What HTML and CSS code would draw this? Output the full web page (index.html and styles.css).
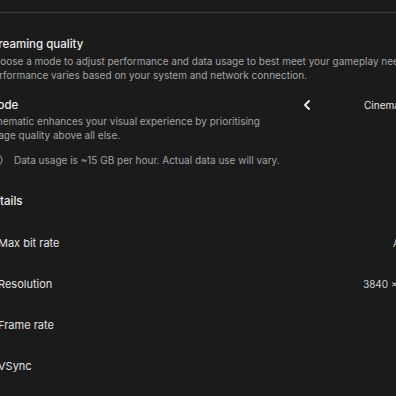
FILE: index.html
```html
<!DOCTYPE html>
<html>
<head>
<meta charset="utf-8">
<link rel="stylesheet" href="styles.css">
</head>
<body>
<div class="page">
  <div class="topbar"></div>
  <section class="quality">
    <h2 class="title">Streaming quality</h2>
    <p class="desc">Choose a mode to adjust performance and data usage to best meet your gameplay needs.<br>Performance varies based on your system and network connection.</p>

    <div class="mode-row">
      <div class="mode-text">
        <div class="label">Mode</div>
        <p class="desc mode-desc">Cinematic enhances your visual experience by prioritising<br>image quality above all else.</p>
      </div>
      <div class="selector">
        <svg class="chev" width="8" height="10" viewBox="0 0 8 10"><path d="M6 1 L2 5 L6 9" fill="none" stroke="#f2f2f2" stroke-width="1.8" stroke-linecap="round" stroke-linejoin="round"/></svg>
        <span class="sel-value">Cinematic</span>
      </div>
    </div>

    <div class="info">
      <svg class="info-icon" width="12" height="12" viewBox="0 0 12 12"><circle cx="6" cy="6" r="5" fill="none" stroke="#8a8a8a" stroke-width="1.1"/><path d="M6 5.2 V8.6" stroke="#8a8a8a" stroke-width="1.1"/><circle cx="6" cy="3.5" r="0.7" fill="#8a8a8a"/></svg>
      <span>Data usage is ~15 GB per hour. Actual data use will vary.</span>
    </div>
  </section>

  <section class="details">
    <div class="details-head">Details</div>
    <div class="row"><span class="row-label">Max bit rate</span><span class="row-value value-auto">Auto</span></div>
    <div class="row"><span class="row-label">Resolution</span><span class="row-value">3840 x 2160</span></div>
    <div class="row"><span class="row-label">Frame rate</span></div>
    <div class="row"><span class="row-label">VSync</span></div>
  </section>
</div>
</body>
</html>
```

FILE: styles.css
```css
* { box-sizing: border-box; }
html, body {
  margin: 0;
  padding: 0;
  background: #1b1b1b;
  overflow: hidden;
}
body {
  font-family: Inter, "Noto Sans", sans-serif;
  color: #e6e6e6;
}
.page {
  margin-left: -13px;
  width: 560px;
}
.topbar {
  height: 13px;
  border-bottom: 1px solid #3a3a3a;
}
.quality {
  padding-top: 23px;
}
.title {
  margin: 0;
  font-size: 11.5px;
  font-weight: 500;
  line-height: 16px;
  color: #ececec;
}
.desc {
  margin: 2px 0 0;
  font-size: 10px;
  line-height: 14px;
  color: #a4a4a4;
}
.mode-row {
  display: flex;
  align-items: flex-start;
  margin-top: 15px;
}
.mode-text {
  width: 316px;
}
.label {
  font-size: 11.5px;
  font-weight: 500;
  line-height: 16px;
  color: #ececec;
}
.mode-desc {
  margin-top: 1px;
}
.selector {
  display: flex;
  align-items: center;
  height: 16px;
}
.chev { display: block; }
.sel-value {
  margin-left: 53px;
  font-size: 10px;
  color: #e6e6e6;
}
.info {
  display: flex;
  align-items: center;
  gap: 11px;
  margin-top: 11px;
  margin-left: 4px;
  height: 14px;
  font-size: 10px;
  color: #a4a4a4;
}
.info-icon { flex: none; }
.details {
  padding-top: 26px;
}
.details-head {
  margin-left: -2px;
  font-size: 11.5px;
  font-weight: 500;
  line-height: 16px;
  color: #ececec;
}
.row {
  display: grid;
  grid-template-columns: 363px auto;
  align-items: center;
  height: 41px;
  padding-left: 11px;
}
.details-head + .row { margin-top: 13px; }
.row-label {
  font-size: 11px;
  color: #e2e2e2;
}
.row-value {
  font-size: 10px;
  color: #cfcfcf;
  margin-left: 2px;
}
.value-auto { margin-left: 32px; }
```
